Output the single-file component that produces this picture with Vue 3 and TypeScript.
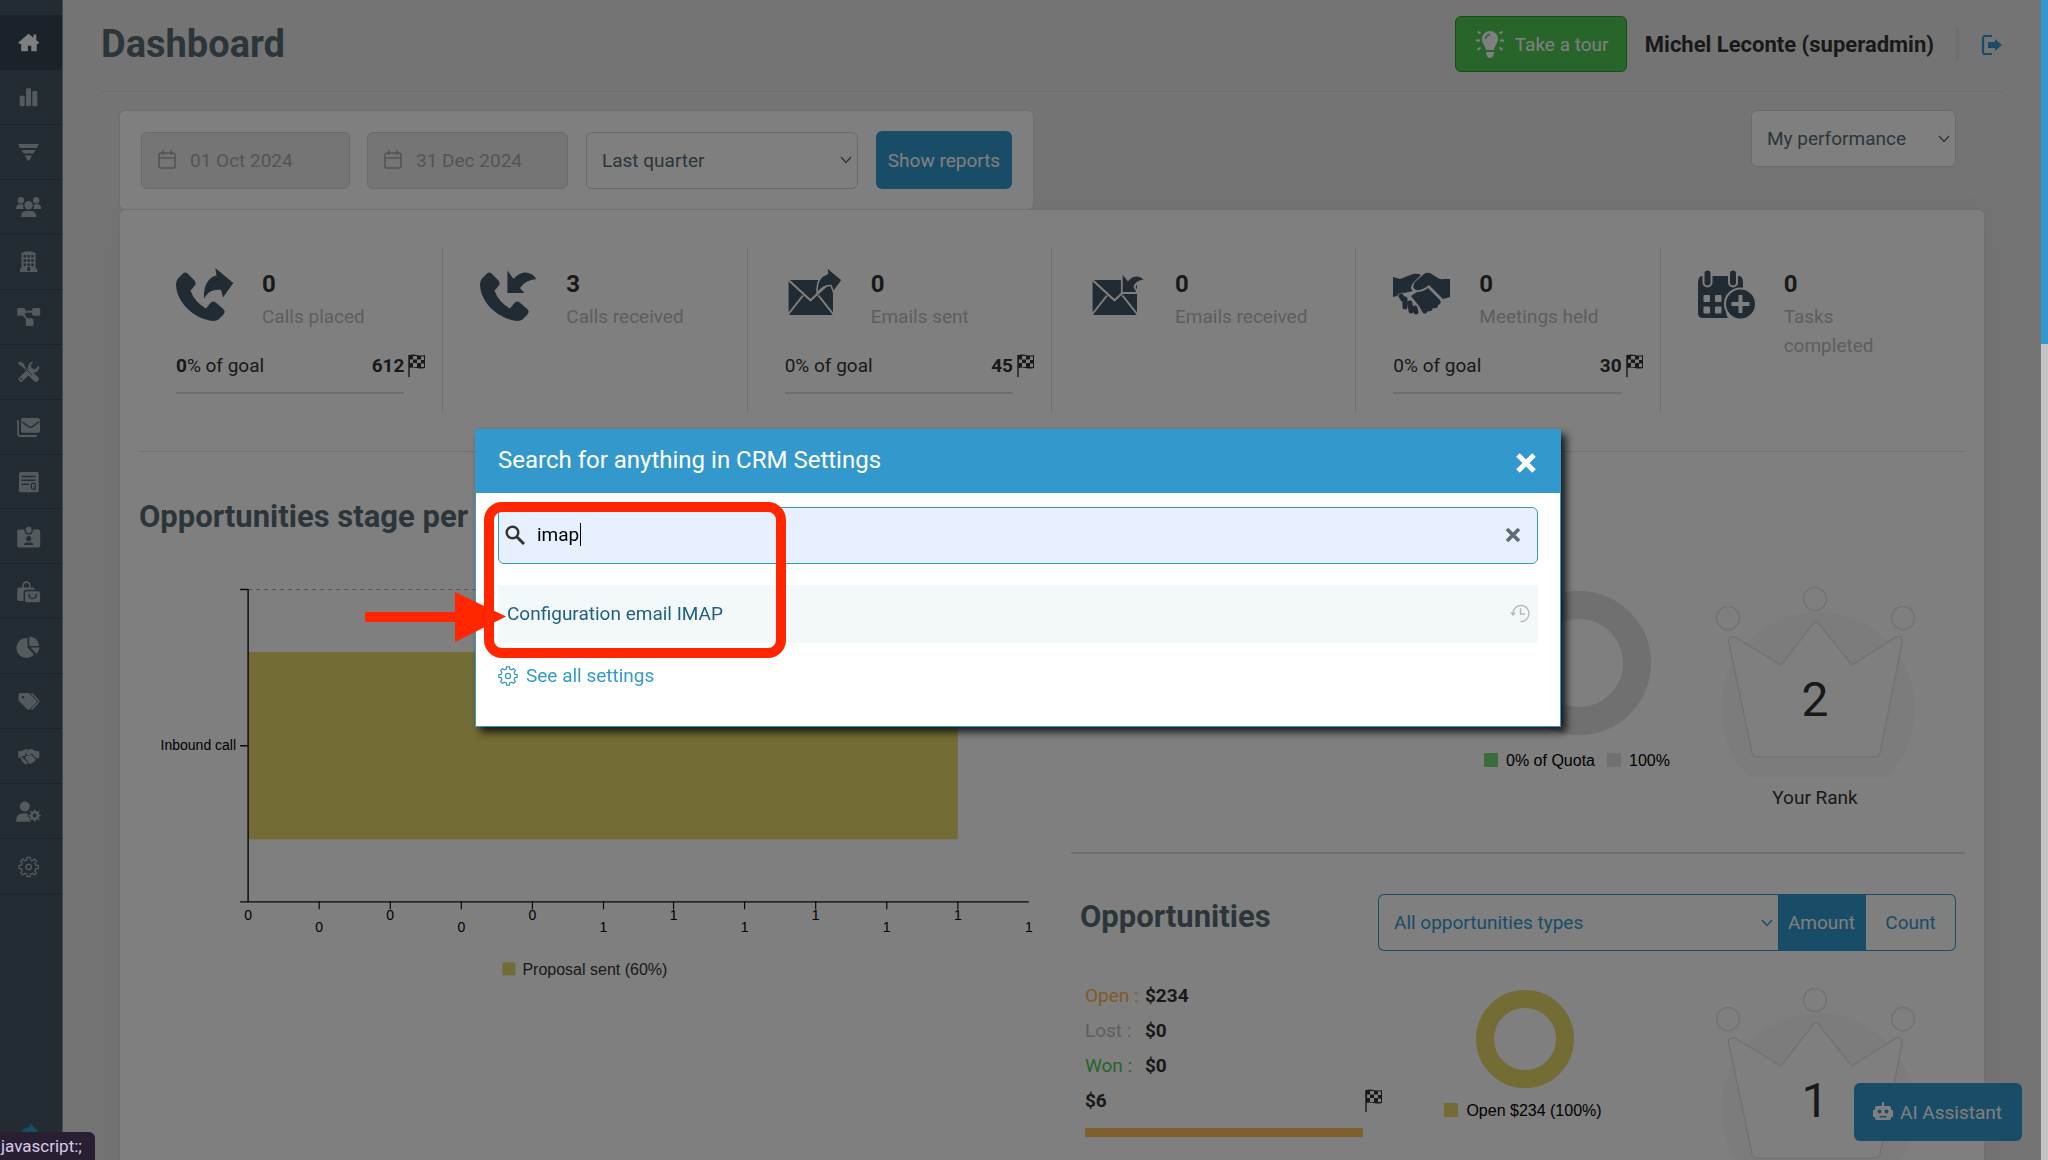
<script setup lang="ts">
import { ref } from 'vue'

interface NavItem { name: string; art: string }
interface Stat { label: string; value: string; icon: string; percent?: string; strong?: boolean; goal?: string; narrow?: boolean }

// Outline of a cog with square teeth
function gear(cx: number, cy: number, outer: number, inner: number, teeth: number): string {
  const pts: string[] = []
  const step = (Math.PI * 2) / teeth
  for (let i = 0; i < teeth; i++) {
    const a = i * step - Math.PI / 2
    const marks: [number, number][] = [[-0.3, inner], [-0.2, outer], [0.2, outer], [0.3, inner]]
    for (const [k, r] of marks) {
      pts.push(`${(cx + r * Math.cos(a + k * step)).toFixed(2)} ${(cy + r * Math.sin(a + k * step)).toFixed(2)}`)
    }
  }
  return 'M' + pts.join('L') + 'Z'
}

const cut = '#485866'
const handshake =
  '<path d="M0 4l7 2 13-5q5-1 8 1l-8 8q-4 5 0 8l-9 2q-5-1-7 3l-4 1z"/>' +
  '<path d="M37 0l8 5q3 2 6 1h6v18l-7 2-14-14q-7 6-13 5-5-3-1-8l9-8q3-2 6-1z"/>' +
  '<path d="M24 19q6 0 11-4l12 12q2 4-2 5 0 4-5 3-1 4-5 3-2 4-5 2l-4-7-4-5-4-5z"/>' +
  '<g fill="none" stroke="currentColor" stroke-width="5" stroke-linecap="round"><path d="M8 23l2 3M12 26l0 8M17 30l1 8M22 35l1 4"/></g>'

const nav: NavItem[] = [
  { name: 'Home', art: '<path d="M12.6 3.7l4.9 4.1V4.5h2.8v5.7l2.8 2.4-1.2 1.4h-1.2v7.3h-5.4v-5.6h-3.4v5.6H5.2V14H3.6l-1.3-1.4z"/>' },
  { name: 'Statistics', art: '<rect x="3.7" y="10.7" width="5" height="10.6" rx="1.2"/><rect x="10" y="3.3" width="5" height="18" rx="1.2"/><rect x="16.3" y="6" width="5" height="15.3" rx="1.2"/>' },
  { name: 'Funnel', art: '<path d="M3 4h19q1 0 .5 1l-1.7 3H4.2L2.5 5q-.5-1 .5-1zM5.5 10h14L17.3 13.6H7.7zM9 15.6h7L13.7 20q-1.2 1.3-2.4 0z"/>' },
  { name: 'Contacts', art: '<circle cx="4.9" cy="5.2" r="3.2"/><circle cx="20.2" cy="5.2" r="3.2"/><circle cx="12.6" cy="10.3" r="4.2"/><path d="M0 14q0-5 4.5-5 3 0 3 1.5-.6 2 .2 3.5zM25.2 14q0-5-4.5-5-3 0-3 1.5.6 2-.2 3.5zM5 22q0-6 5-6h5.2q5 0 5 6z"/>' },
  { name: 'Companies', art: `<path d="M5.5 3.6q0-1 1-1H8q.2-1.2 1-1.2h7q.8 0 1 1.2h1.5q1 0 1 1v15h1.8V22H4v-3.4h1.5z"/><path d="M7.5 6.2h10.3M7.5 10.5h10.3M7.5 14.7h10.3" stroke="${cut}" stroke-width="2.6" stroke-dasharray="2.6 1.25" fill="none"/><path d="M11.3 17h2.8v4h-2.8z" fill="${cut}"/>` },
  { name: 'Processes', art: '<rect x="1.2" y="3" width="8" height="7.8" rx="1.6"/><rect x="16.2" y="3" width="8" height="7.8" rx="1.6"/><rect x="9.8" y="13.3" width="7.6" height="7.8" rx="1.6"/><path d="M8 6.8h9M6.5 9l6 7" stroke="currentColor" stroke-width="1.9" fill="none"/>' },
  { name: 'Services', art: `<g fill="none" stroke="currentColor" stroke-linecap="round"><path d="M4.5 3.5l2 2 6 6" stroke-width="2"/><path d="M3.7 3.2l3.2 1.7" stroke-width="3"/><path d="M15 14l5 5" stroke-width="5.6"/><path d="M5 19.3l9-8.6" stroke-width="5"/></g><path d="M23 5.6a5.6 5.6 0 1 1-6-4.1l-2.2 3.7 1 3 3.2 1z"/><circle cx="5.2" cy="19" r="1" fill="${cut}"/><path d="M9 8l7 7" stroke="${cut}" stroke-width=".8"/>` },
  { name: 'Mail', art: `<path d="M2 6v12.5q0 2.5 2.5 2.5H20" fill="none" stroke="currentColor" stroke-width="1.8" stroke-linecap="round"/><rect x="5" y="3" width="19" height="14.7" rx="2"/><path d="M5.5 6.5l7.5 5.3q1.5 1 3 0l7.5-5.3" fill="none" stroke="${cut}" stroke-width="1.4"/>` },
  { name: 'Quotes', art: `<rect x="3" y="2" width="19.7" height="20.3" rx="1.5"/><path d="M6 6.5h13M6 10.3h13M6 14.2h6.5" stroke="${cut}" stroke-width="1.5" stroke-linecap="round"/><rect x="15.3" y="13.2" width="4" height="6" rx="1.8" fill="none" stroke="${cut}" stroke-width="1.2"/><path d="M17.5 17.5l2 2.5" stroke="${cut}" stroke-width="1.2"/>` },
  { name: 'Staff', art: `<rect x="1.2" y="4.5" width="23" height="18" rx="1.8"/><rect x="9.2" y="1.2" width="7" height="7.6" rx="3" stroke="${cut}" stroke-width="1.3"/><circle cx="12.7" cy="13.5" r="2.6" fill="${cut}"/><path d="M8 20q0-2.5 2.8-2.5h3.8q2.8 0 2.8 2.5z" fill="${cut}"/>` },
  { name: 'Products', art: `<path d="M7 9V5.5a3.4 3.4 0 0 1 6.8 0V9" fill="none" stroke="currentColor" stroke-width="1.6"/><rect x="1.2" y="7.5" width="17.5" height="13.5" rx="2"/><rect x="8.3" y="10.5" width="16.5" height="12.5" rx="2.5" stroke="${cut}" stroke-width="1.4"/><path d="M13 14.5q.3 4 3.6 4t3.6-4" fill="none" stroke="${cut}" stroke-width="1.4" stroke-linecap="round"/>` },
  { name: 'Reports', art: '<path d="M11.5 3v9.5l6.5 7A10 10 0 1 1 11.5 3z"/><path d="M13.3 1.5a10 10 0 0 1 9.8 9.5h-9.8zM14.5 12.6h9a10 10 0 0 1-3 6.3z"/>' },
  { name: 'Tags', art: `<path d="M2.5 4.5q0-1.5 1.5-1.5h8q1 0 1.8.8l6.4 6.6q1 1.2 0 2.3l-6.500 6.500q-1.200 1.200-2.400 0l-8-7.800q-.8-.8-.8-1.800z"/><circle cx="7" cy="7.3" r="1.3" fill="${cut}"/><path d="M15.5 3.3l6.7 7q1 1.2 0 2.3l-6.7 7" fill="none" stroke="currentColor" stroke-width="1.5"/>` },
  { name: 'Deals', art: `<g transform="translate(2.2 4) scale(.37)">${handshake}</g>` },
  { name: 'Users', art: `<circle cx="8.8" cy="6.5" r="5"/><path d="M0 21.8q0-8.3 7-8.3h4q3 0 4.5 1.5l-1 6.8z"/><path d="${gear(18.7, 15.6, 6.6, 5, 8)}" stroke="${cut}" stroke-width="1"/><circle cx="18.7" cy="15.6" r="2" fill="${cut}"/>` },
  { name: 'Settings', art: `<path d="${gear(12.6, 12, 9.8, 7.4, 8)}" fill="none" stroke="currentColor" stroke-width="1.3" stroke-linejoin="round"/><circle cx="12.6" cy="12" r="2.7" fill="none" stroke="currentColor" stroke-width="1.3"/>` }
]

const phone = '<path d="M6 7.5Q9 4 12 7l6 6q3 3 .5 6l-4 4.5Q18 34.5 30 41.5l4-5q3-3.5 6-.8l7 6q3 2.8.5 5.8L43 52q-2 2-6 2C18 52 0 35 0 17q0-3 2-5.5z"/>'
const envelope =
  '<rect x=".6" y="13" width="44.4" height="35" rx="1.5"/>' +
  '<path d="M1 13.5l21.5 19.8L44 13.5M0 47.5l15-19M45.5 47.5l-15-19" fill="none" stroke="#fff" stroke-width="2"/>'
const art: Record<string, string> = {
  callOut: phone + '<path d="M39.3 1l18 15L47 30.5 45 23c-9-1-14 3-17 9-1-14 5-22 12.5-23.5z"/>',
  callIn: phone + '<path d="M27.4 3.5V26h17l-4.5-5Q45 13 56.5 12C50 3 40 4 33.5 12z"/>',
  mailOut: `<g transform="translate(3 0)">${envelope}<path d="M38.5 0l15.7 13L45.5 25 43 18.5Q34 18 29.5 27 27 11 39.5 6.5z" stroke="#fff" stroke-width="1.6"/></g>`,
  mailIn: `<g transform="translate(3 0)">${envelope}<path d="M29.8 5.5V26H46l-3.5-6Q44 14 54 13 44 4 36 13z" stroke="#fff" stroke-width="1.8"/></g>`,
  hands: `<g transform="translate(0 6)">${handshake}</g>`,
  tasks:
    '<path d="M0 16q0-7 4-7h37q4 0 4 7v14q-14 2-17 14 0 4 2 7H5q-5 0-5-5z"/>' +
    '<g stroke="#fff" stroke-width="2"><rect x="5.5" y="2.5" width="8" height="17" rx="4"/><rect x="31" y="2.5" width="8" height="17" rx="4"/></g>' +
    '<g fill="#fff"><rect x="5.5" y="28" width="6.5" height="7" rx="1"/><rect x="17" y="28" width="6.5" height="7" rx="1"/><rect x="5.5" y="39.5" width="6.5" height="7" rx="1"/><rect x="17" y="39.5" width="6.5" height="7" rx="1"/></g>' +
    '<circle cx="42.5" cy="37" r="15.5" stroke="#fff" stroke-width="2"/><path d="M42.5 28v18M33.5 37h18" stroke="#fff" stroke-width="4"/>'
}

const stats: Stat[] = [
  { label: 'Calls placed', value: '0', icon: 'callOut', percent: '0', strong: true, goal: '612' },
  { label: 'Calls received', value: '3', icon: 'callIn' },
  { label: 'Emails sent', value: '0', icon: 'mailOut', percent: '0', goal: '45' },
  { label: 'Emails received', value: '0', icon: 'mailIn' },
  { label: 'Meetings held', value: '0', icon: 'hands', percent: '0', goal: '30' },
  { label: 'Tasks completed', value: '0', icon: 'tasks', narrow: true }
]

const flag =
  '<path d="M1 1v22" stroke="currentColor" stroke-width="1.4"/>' +
  '<path d="M1 1q4-1 8 0t8 0v13q-4 1-8 0t-8 0z"/>' +
  '<path d="M5 2h4v3.5H5zM13 2.5h3V6h-3zM2 5.5h3V9H2zM9 5.5h4V9H9zM5 9h4v4H5zM13 9.5h3v3.5h-3z" fill="#fff"/>'

const ticks = ['0', '0', '0', '0', '0', '1', '1', '1', '1', '1', '1', '1'].map((text, i) => ({
  text,
  x: Math.round(248 + i * 70.9),
  y: i % 2 ? 932 : 920
}))

const query = ref('imap')
const dateFrom = ref('01 Oct 2024')
const dateTo = ref('31 Dec 2024')
const smallGear = gear(10, 10, 9.2, 7.2, 8)
</script>

<template>
  <div class="page">
    <nav class="sidebar" aria-label="Main">
      <div class="nav-list">
        <a v-for="(item, i) in nav" :key="item.name" href="#" class="nav-item" :class="{ active: i === 0 }" :aria-label="item.name">
          <svg width="26" height="24" viewBox="0 0 26 24" fill="currentColor" v-html="item.art"></svg>
        </a>
      </div>
      <a href="#" class="expand" aria-label="Expand menu">
        <svg width="20" height="20" viewBox="0 0 20 20" fill="currentColor"><path d="M11 0l8 8-8 8v-4Q4 12 1 18 0 5 11 4z" /></svg>
      </a>
    </nav>

    <main class="main">
      <header class="header">
        <h1>Dashboard</h1>
        <div class="account">
          <button class="tour" type="button">
            <svg width="30" height="30" viewBox="0 0 30 30" fill="currentColor">
              <path d="M15 2a8 8 0 0 1 8 8c0 4-3 6-4 11h-8C10 16 7 14 7 10a8 8 0 0 1 8-8zM11 23h8v2q-1 1-1.5 3-2.5 2-5 0Q12 26 11 25z" />
              <path d="M10.5 10Q11 6 15 5.5" fill="none" stroke="#50ca54" stroke-width="1.4" />
              <path d="M1 11.500h4M25 11.500h4M2.500 2.500l3 2M27.500 2.500l-3 2M2.500 21l3-2.500M27.500 21l-3-2.500" stroke="currentColor" stroke-width="2" />
            </svg>
            Take a tour
          </button>
          <strong class="user">Michel Leconte (superadmin)</strong>
          <a href="#" class="logout" aria-label="Log out">
            <svg width="22" height="22" viewBox="0 0 22 22" fill="currentColor">
              <path d="M11 2H4q-2 0-2 2v14q0 2 2 2h7" fill="none" stroke="currentColor" stroke-width="2.2" />
              <path d="M7 8h7V5l7 6-7 6v-3H7z" />
            </svg>
          </a>
        </div>
      </header>

      <div class="filters-row">
        <form class="filters" @submit.prevent>
          <div class="date from">
            <svg width="18" height="20" viewBox="0 0 18 20" fill="none" stroke="currentColor" stroke-width="1.6"><rect x="1" y="3" width="16" height="15" rx="2" /><path d="M1 8h16M5 0v5M13 0v5" /></svg>
            <input v-model="dateFrom" type="text" disabled aria-label="From" />
          </div>
          <div class="date to">
            <svg width="18" height="20" viewBox="0 0 18 20" fill="none" stroke="currentColor" stroke-width="1.6"><rect x="1" y="3" width="16" height="15" rx="2" /><path d="M1 8h16M5 0v5M13 0v5" /></svg>
            <input v-model="dateTo" type="text" disabled aria-label="To" />
          </div>
          <div class="pick period">
            <select aria-label="Period"><option>Last quarter</option></select>
            <svg width="12" height="8" viewBox="0 0 12 8" fill="none" stroke="currentColor" stroke-width="1.4"><path d="M1 1l5 5.5L11 1" /></svg>
          </div>
          <button class="primary" type="submit">Show reports</button>
        </form>
        <div class="pick scope">
          <select aria-label="Scope"><option>My performance</option></select>
          <svg width="12" height="8" viewBox="0 0 12 8" fill="none" stroke="currentColor" stroke-width="1.4"><path d="M1 1l5 5.5L11 1" /></svg>
        </div>
      </div>

      <section class="board">
        <div class="stats">
          <article v-for="s in stats" :key="s.label" class="stat">
            <div class="stat-top">
              <svg width="60" height="56" viewBox="0 0 60 56" fill="currentColor" v-html="art[s.icon]"></svg>
              <div>
                <div class="value">{{ s.value }}</div>
                <div class="label" :class="{ narrow: s.narrow }">{{ s.label }}</div>
              </div>
            </div>
            <template v-if="s.goal">
              <div class="goal">
                <span><b v-if="s.strong">{{ s.percent }}</b><template v-else>{{ s.percent }}</template>% of goal</span>
                <b class="target">{{ s.goal }}</b>
                <svg width="18" height="24" viewBox="0 0 18 24" fill="currentColor" v-html="flag"></svg>
              </div>
              <div class="goal-line"></div>
            </template>
          </article>
        </div>

        <div class="columns">
          <section class="stage">
            <h2>Opportunities stage per</h2>
            <svg class="chart" viewBox="139 570 911 420" role="img" aria-label="Opportunities by stage">
              <path d="M248 589.5H1028" stroke="#aaa" stroke-dasharray="4 4" />
              <rect x="248" y="652" width="709" height="187" fill="#e6d86a" />
              <path d="M240 589.5H248M240 745.5H248M248 589V901M240 901.5H1028" fill="none" stroke="#111" stroke-width="1.4" />
              <path v-for="t in ticks.slice(1, 11)" :key="t.x" :d="`M${t.x} 901v8`" stroke="#111" stroke-width="1.2" />
              <text x="236" y="750" text-anchor="end" class="axis">Inbound call</text>
              <text v-for="t in ticks" :key="t.x" :x="t.x" :y="t.y" text-anchor="middle" class="axis">{{ t.text }}</text>
              <rect x="502" y="962" width="13" height="13" fill="#e6d86a" />
              <text x="522" y="975" class="legend-text">Proposal sent (60%)</text>
            </svg>
          </section>

          <div class="side">
            <section class="quota">
              <figure class="ring big">
                <svg width="146" height="146" viewBox="0 0 146 146"><circle cx="73" cy="73" r="58" fill="none" stroke="#e0e0e0" stroke-width="28" /></svg>
                <figcaption><i class="sw green"></i>0% of Quota<i class="sw grey second"></i>100%</figcaption>
              </figure>
              <figure class="crown">
                <svg width="204" height="194" viewBox="1713 584 204 194">
                  <circle cx="1818" cy="709" r="97" fill="#f8f8f8" />
                  <g fill="#fff" stroke="#e6e6e6" stroke-width="1.6">
                    <circle cx="1728" cy="618" r="11.5" /><circle cx="1815" cy="599" r="11.5" /><circle cx="1903" cy="618" r="11.5" />
                    <path d="M1729 643q-2-7 6-6l46 28 32-41q3-4 6 0l33 41 44-28q7-2 6 6l-22 110q-1 4-5 4h-118q-4 0-5-4z" />
                  </g>
                  <text x="1815" y="716" text-anchor="middle" class="rank">2</text>
                </svg>
                <figcaption>Your Rank</figcaption>
              </figure>
            </section>

            <section class="opps">
              <div class="opps-head">
                <h2>Opportunities</h2>
                <div class="group">
                  <div class="pick types">
                    <select aria-label="Opportunity type"><option>All opportunities types</option></select>
                    <svg width="12" height="8" viewBox="0 0 12 8" fill="none" stroke="currentColor" stroke-width="1.4"><path d="M1 1l5 5.5L11 1" /></svg>
                  </div>
                  <button type="button" class="seg on">Amount</button>
                  <button type="button" class="seg">Count</button>
                </div>
              </div>
              <div class="opps-body">
                <div class="totals">
                  <dl>
                    <dt class="open">Open :</dt><dd>$234</dd>
                    <dt class="lost">Lost :</dt><dd>$0</dd>
                    <dt class="won">Won :</dt><dd>$0</dd>
                  </dl>
                  <div class="total"><b>$6</b><svg width="18" height="24" viewBox="0 0 18 24" fill="currentColor" v-html="flag"></svg></div>
                  <div class="meter"></div>
                </div>
                <figure class="ring small">
                  <svg width="98" height="98" viewBox="0 0 98 98"><circle cx="49" cy="49" r="40" fill="none" stroke="#e6d86a" stroke-width="18" /></svg>
                  <figcaption><i class="sw yellow"></i>Open $234 (100%)</figcaption>
                </figure>
                <figure class="crown">
                  <svg width="204" height="194" viewBox="1713 584 204 194">
                    <circle cx="1818" cy="709" r="97" fill="#f8f8f8" />
                    <g fill="#fff" stroke="#e6e6e6" stroke-width="1.6">
                      <circle cx="1728" cy="618" r="11.5" /><circle cx="1815" cy="599" r="11.5" /><circle cx="1903" cy="618" r="11.5" />
                      <path d="M1729 643q-2-7 6-6l46 28 32-41q3-4 6 0l33 41 44-28q7-2 6 6l-22 110q-1 4-5 4h-118q-4 0-5-4z" />
                    </g>
                    <text x="1815" y="716" text-anchor="middle" class="rank">1</text>
                  </svg>
                </figure>
              </div>
            </section>
          </div>
        </div>
      </section>
    </main>

    <button class="assistant" type="button">
      <svg width="20" height="20" viewBox="0 0 20 20" fill="currentColor">
        <path d="M9 0h2v4h5q2 0 2 2v2h2v7h-2v1q0 2-2 2H4q-2 0-2-2v-1H0V8h2V6q0-2 2-2h5z" />
        <g fill="#3399cc"><circle cx="6.5" cy="9.5" r="2" /><circle cx="13.5" cy="9.5" r="2" /><path d="M6.5 14h7v1.5h-7z" /></g>
      </svg>
      AI Assistant
    </button>

    <div class="overlay">
      <div class="modal" role="dialog" aria-label="Search settings">
        <div class="modal-head">
          <span>Search for anything in CRM Settings</span>
          <button type="button" aria-label="Close">
            <svg width="22" height="22" viewBox="0 0 22 22" fill="none" stroke="currentColor" stroke-width="5"><path d="M3 3l16 16M19 3L3 19" /></svg>
          </button>
        </div>
        <div class="modal-body">
          <div class="search">
            <svg width="20" height="20" viewBox="0 0 20 20" fill="none" stroke="#333" stroke-width="2.4"><circle cx="7.5" cy="7.5" r="5.8" /><path d="M12 12l7 7" stroke-width="3" /></svg>
            <input v-model="query" type="text" aria-label="Search settings" />
            <span class="caret"></span>
            <button type="button" aria-label="Clear">
              <svg width="16" height="16" viewBox="0 0 16 16" fill="none" stroke="currentColor" stroke-width="3.6"><path d="M2 2l12 12M14 2L2 14" /></svg>
            </button>
          </div>
          <a href="#" class="result">
            Configuration email IMAP
            <svg width="20" height="20" viewBox="0 0 20 20" fill="none" stroke="#b4b8ba" stroke-width="1.4"><path d="M3 10a8 8 0 1 1 7.5 8.5" /><path d="M10.5 5v6h4.500" /><path d="M0 9.500h6L3 13z" fill="#b4b8ba" stroke="none" /></svg>
          </a>
          <a href="#" class="all">
            <svg width="20" height="20" viewBox="0 0 20 20" fill="none" stroke="currentColor" stroke-width="1.2"><path :d="smallGear" /><circle cx="10" cy="10" r="2.6" /></svg>
            See all settings
          </a>
        </div>
        <div class="marker"></div>
        <svg class="arrow" width="141" height="50" viewBox="0 0 141 50" fill="#ff2600"><path d="M0 20h90V0l51 24.500L90 50V30H0z" /></svg>
      </div>
    </div>

    <div class="status">javascript:;</div>
    <div class="scroll"><div class="thumb"></div></div>
  </div>
</template>

<style>
body {
  background: #e9e9e9;
}
</style>

<style scoped>
* {
  box-sizing: border-box;
}
.page {
  display: flex;
  height: 100vh;
  overflow: hidden;
  background: #e9e9e9;
  color: #333;
  font-family: Roboto, "Liberation Sans", sans-serif;
  font-size: 19px;
  line-height: 29px;
}
button,
input,
select {
  font: inherit;
  color: inherit;
  margin: 0;
}
button {
  cursor: pointer;
}
a {
  text-decoration: none;
}
svg {
  display: block;
  flex: none;
}
h1,
h2 {
  margin: 0;
  color: #586c74;
  font-weight: 700;
}
h1 {
  font-size: 38px;
  line-height: 56px;
}
h2 {
  font-size: 31px;
  line-height: 46px;
}

/* Sidebar */
.sidebar {
  display: flex;
  flex-direction: column;
  justify-content: space-between;
  flex: none;
  width: 63px;
  padding-top: 15px;
  background: #485866;
  border-right: 1px solid #88949c;
}
.nav-list {
  display: flex;
  flex-direction: column;
  height: 879px;
}
.nav-item {
  display: flex;
  flex: 1;
  align-items: center;
  padding: 1px 0 0 16px;
  border-bottom: 1px solid #3a4652;
  color: #a8b6be;
}
.nav-item.active {
  background: #364452;
  color: #fff;
}
.expand {
  padding: 0 0 17px 19px;
  color: #3399cc;
}

/* Header */
.main {
  flex: 1;
  min-width: 0;
  padding: 0 45px 0 38px;
}
.header {
  display: flex;
  align-items: center;
  justify-content: space-between;
  height: 92px;
  padding-bottom: 3px;
  border-bottom: 1px solid #d8d8d8;
}
.account {
  display: flex;
  align-items: center;
}
.tour {
  display: flex;
  align-items: center;
  gap: 10px;
  width: 172px;
  height: 56px;
  padding: 0 0 0 19px;
  border: 1px solid #28a020;
  border-radius: 6px;
  background: #50ca54;
  color: #fff;
}
.user {
  margin-left: 18px;
  font-size: 22px;
}
.logout {
  margin-left: 22px;
  padding: 6px 0 5px 22px;
  border-left: 3px solid #dcdcdc;
  color: #3399cc;
}

/* Filters */
.filters-row {
  display: flex;
  align-items: flex-start;
  justify-content: space-between;
  padding: 18px 47px 0 18px;
}
.filters {
  display: flex;
  align-items: center;
  padding: 20px 21px;
  border: 1px solid #dedede;
  border-radius: 6px;
  background: #fff;
}
.date {
  display: flex;
  align-items: center;
  gap: 14px;
  height: 57px;
  padding-left: 16px;
  border: 1px solid #d4d4d4;
  border-radius: 6px;
  background: #ebebeb;
  color: #a8a8a8;
}
.from {
  width: 209px;
}
.to {
  width: 201px;
  margin: 0 18px 0 17px;
}
.date input {
  flex: 1;
  min-width: 0;
  padding: 0;
  border: 0;
  background: none;
}
.pick {
  display: flex;
  align-items: center;
  position: relative;
  height: 57px;
  border: 1px solid #d4d4d4;
  border-radius: 6px;
  background: #fff;
  color: #586c74;
}
.pick select {
  width: 100%;
  height: 100%;
  padding: 0 30px 0 15px;
  border: 0;
  background: none;
  appearance: none;
}
.pick svg {
  position: absolute;
  right: 5px;
  pointer-events: none;
}
.period {
  width: 272px;
}
.scope {
  width: 205px;
}
.primary {
  width: 136px;
  height: 58px;
  margin-left: 18px;
  padding: 0;
  border: 0;
  border-radius: 6px;
  background: #3399cc;
  color: #fff;
}

/* Board */
.board {
  margin: -1px 18px 0;
  padding: 38px 19px 400px;
  border: 1px solid #dedede;
  border-radius: 6px;
  background: #fff;
  box-shadow: 0 0 30px rgba(0, 0, 0, 0.05);
}
.stats {
  display: grid;
  grid-template-columns: repeat(6, 1fr);
  padding-bottom: 38px;
  border-bottom: 1px solid #dedede;
}
.stat {
  height: 165px;
  padding: 19px 16px 0 37px;
  border-right: 1px solid #dedede;
}
.stat:last-child {
  border-right: 0;
}
.stat-top {
  display: flex;
  gap: 26px;
  color: #425666;
}
.value {
  color: #333;
  font-size: 24px;
  font-weight: 700;
  line-height: 35px;
}
.label {
  color: #bcbcbc;
}
.narrow {
  width: 100px;
}
.goal {
  display: flex;
  align-items: center;
  gap: 4px;
  margin-top: 20px;
}
.target {
  margin-left: auto;
}
.goal-line {
  height: 2px;
  margin: 12px 22px 0 0;
  background: #dedede;
}
.columns {
  display: grid;
  grid-template-columns: 1.02fr 1fr;
  gap: 20px;
}
.stage h2 {
  margin-top: 42px;
}
.chart {
  width: 100%;
  margin-top: 30px;
}
.axis {
  font: 14px "Liberation Sans", sans-serif;
  fill: #000;
}
.legend-text {
  font: 16px "Liberation Sans", sans-serif;
  fill: #333;
}

/* Quota */
.quota {
  display: flex;
  justify-content: flex-end;
  padding: 132px 48px 40px 0;
  border-bottom: 2px solid #dedede;
}
figure {
  display: flex;
  flex-direction: column;
  align-items: center;
  margin: 0;
}
.ring figcaption {
  display: flex;
  align-items: center;
  color: #000;
  font: 16px/20px "Liberation Sans", sans-serif;
  white-space: nowrap;
}
.sw {
  width: 14px;
  height: 14px;
  margin: 0 8px 2px 0;
}
.second {
  margin-left: 12px;
}
.green {
  background: #74d878;
}
.grey {
  background: #e0e0e0;
}
.yellow {
  background: #e6d86a;
}
.big {
  gap: 15px;
  width: 192px;
  margin-right: 38px;
  padding-top: 6px;
}
.big figcaption {
  padding-right: 4px;
}
.small {
  gap: 13px;
  width: 160px;
  padding-top: 12px;
  margin-right: 108px;
}
.small figcaption {
  padding-right: 4px;
}
.crown {
  gap: 5px;
}
.rank {
  font: 48px Roboto, sans-serif;
  fill: #333;
}

/* Opportunities */
.opps {
  padding: 40px 9px 0 9px;
}
.opps-head {
  display: flex;
  align-items: flex-start;
  justify-content: space-between;
}
.group {
  display: flex;
  width: 578px;
}
.types {
  flex: 1;
  border-color: #3399cc;
  border-right: 0;
  border-radius: 6px 0 0 6px;
  color: #3399cc;
}
.seg {
  width: 90px;
  height: 57px;
  padding: 0;
  border: 1px solid #3399cc;
  border-left: 0;
  border-radius: 0 6px 6px 0;
  background: #fff;
  color: #3399cc;
}
.seg.on {
  width: 88px;
  border-radius: 0;
  background: #3399cc;
  color: #fff;
}
.opps-body {
  display: flex;
  padding: 27px 39px 0 5px;
}
.opps .crown {
  padding-top: 7px;
}
.totals {
  width: 298px;
  margin-right: auto;
  line-height: 35px;
}
dl {
  display: grid;
  grid-template-columns: 60px 1fr;
  margin: 0;
}
dd {
  margin: 0;
  font-weight: 700;
}
.open {
  color: #ffb74d;
}
.lost {
  color: #bcbcbc;
}
.won {
  color: #50ca54;
}
.total {
  display: flex;
  align-items: center;
  justify-content: space-between;
}
.meter {
  height: 9px;
  margin: 10px 20px 0 0;
  background: #ffc05a;
}

/* Floating parts */
.assistant {
  display: flex;
  align-items: center;
  gap: 7px;
  position: fixed;
  right: 26px;
  bottom: 19px;
  width: 168px;
  height: 58px;
  padding: 0 0 0 19px;
  border: 0;
  border-radius: 6px;
  background: #3399cc;
  color: #fff;
  white-space: nowrap;
}
.overlay {
  display: flex;
  align-items: center;
  justify-content: center;
  position: fixed;
  inset: 0;
  padding: 0 12px 4px 0;
  background: rgba(0, 0, 0, 0.5);
}
.modal {
  position: relative;
  width: 1086px;
  border: 1px solid #3399cc;
  background: #fff;
  box-shadow: 5px 5px 8px rgba(0, 0, 0, 0.8);
}
.modal-head {
  display: flex;
  align-items: center;
  justify-content: space-between;
  height: 63px;
  padding: 0 23px 2px 22px;
  background: #3399cc;
  color: #fff;
  font-size: 24px;
}
.modal-head button,
.search button {
  display: flex;
  padding: 0;
  border: 0;
  background: none;
}
.modal-head button {
  padding-top: 4px;
}
.modal-body {
  padding: 14px 22px 36px;
}
.search {
  display: flex;
  align-items: center;
  position: relative;
  height: 57px;
  padding: 0 16px 2px 6px;
  border: 1px solid #3399cc;
  border-radius: 6px;
  background: #e7f0ff;
  color: #5c6c74;
}
.search input {
  flex: 1;
  min-width: 0;
  margin-left: 12px;
  padding: 0;
  border: 0;
  outline: 0;
  background: none;
  color: #000;
}
.caret {
  position: absolute;
  left: 81px;
  width: 1px;
  height: 23px;
  background: #000;
}
.result {
  display: flex;
  align-items: center;
  justify-content: space-between;
  height: 58px;
  margin-top: 21px;
  padding: 0 8px 2px 9px;
  background: #f3f8fa;
  color: #1f5f80;
}
.all {
  display: flex;
  align-items: center;
  gap: 8px;
  margin-top: 18px;
  color: #3399cc;
}
.marker {
  position: absolute;
  left: 8px;
  top: 72px;
  width: 302px;
  height: 156px;
  border: 10px solid #ff2600;
  border-radius: 18px;
}
.arrow {
  position: absolute;
  left: -111px;
  top: 162px;
}
.status {
  position: fixed;
  left: 0;
  bottom: 0;
  width: 95px;
  height: 28px;
  padding-left: 1px;
  border-radius: 0 6px 0 0;
  background: #281f33;
  color: #d8cbe8;
  font-size: 17px;
  line-height: 28px;
}
.scroll {
  position: fixed;
  top: 0;
  right: 0;
  bottom: 0;
  width: 7px;
  background: #c4c4c4;
}
.thumb {
  height: 344px;
  background: #3399cc;
}
</style>
